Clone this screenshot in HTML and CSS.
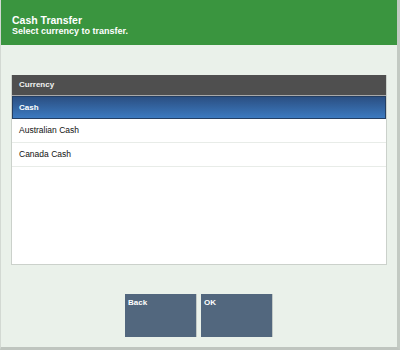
FILE: index.html
```html
<!DOCTYPE html>
<html lang="en">
<head>
    <meta charset="UTF-8">
    <title>Cash Transfer</title>
    <link rel="stylesheet" href="styles.css">
</head>
<body>
    <div class="screen">
        <div class="header">
            <div class="title">Cash Transfer</div>
            <div class="subtitle">Select currency to transfer.</div>
        </div>
        <div class="content">
            <div class="list">
                <div class="list-head">Currency</div>
                <div class="row selected">Cash</div>
                <div class="row">Australian Cash</div>
                <div class="row">Canada Cash</div>
            </div>
            <div class="buttons">
                <div class="btn">Back</div>
                <div class="btn">OK</div>
            </div>
        </div>
    </div>
</body>
</html>
```
FILE: styles.css
```css
body {
    margin: 0;
    font-family: "Liberation Sans", Arial, sans-serif;
}

.screen {
    width: 400px;
    height: 350px;
    box-sizing: border-box;
    background-color: #eaf1ea;
    border-left: 1px solid #d3d9d3;
    border-right: 3px solid #c3cac3;
    border-bottom: 3px solid #bfc5bf;
    display: flex;
    flex-direction: column;
}

.header {
    height: 45px;
    box-sizing: border-box;
    background-color: #3a953f;
    color: #fff;
    padding: 14px 0 0 11px;
}

.title {
    font-size: 10.5px;
    font-weight: bold;
    line-height: 12px;
}

.subtitle {
    font-size: 9px;
    font-weight: bold;
    line-height: 11px;
}

.content {
    padding: 30px 10px 0 10px;
}

.list {
    height: 190px;
    box-sizing: border-box;
    background-color: #fff;
    border: 1px solid #cbd1cb;
    border-top: none;
}

.list-head {
    height: 20px;
    line-height: 20px;
    background-color: #4f4f4f;
    border-bottom: 1px solid #a9a9a9;
    color: #f2f2f2;
    font-size: 8px;
    font-weight: bold;
    padding-left: 7px;
}

.row {
    height: 23px;
    line-height: 23px;
    border-bottom: 1px solid #e8ece8;
    padding-left: 7px;
    font-size: 8.5px;
    color: #111;
}

.row.selected {
    height: 21px;
    line-height: 21px;
    border: 1px solid #243f63;
    padding-left: 6px;
    background: linear-gradient(#2b4f82, #3c7ac0);
    color: #fff;
    font-weight: bold;
    font-size: 8px;
}

.buttons {
    display: flex;
    justify-content: center;
    gap: 4px;
    margin-top: 29px;
}

.btn {
    width: 72px;
    height: 43px;
    box-sizing: border-box;
    background-color: #52677e;
    border-right: 1px solid #c2c9c6;
    color: #fff;
    font-size: 8px;
    font-weight: bold;
    padding: 4px 0 0 3px;
}
```
